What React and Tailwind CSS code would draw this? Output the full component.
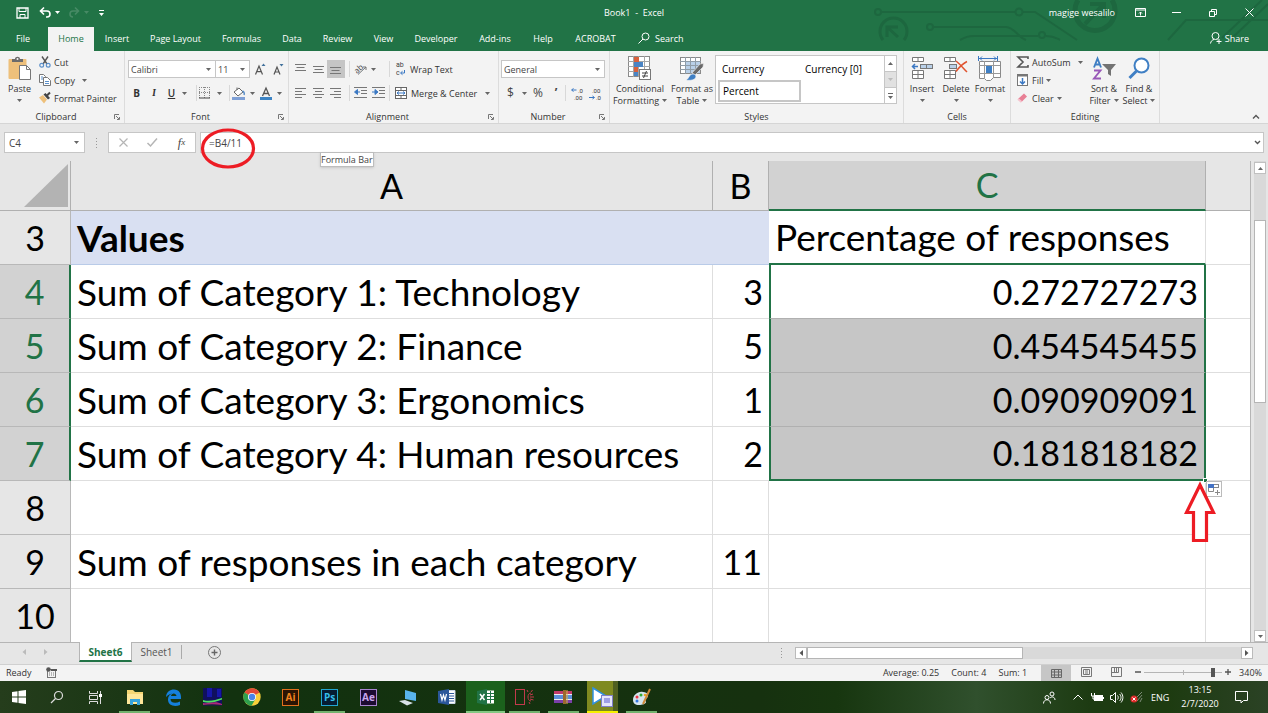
import React, { useState } from "react";

const Svg = ({ w, h, children, className = "" }) => (
  <svg width={w} height={h} viewBox={`0 0 ${w} ${h}`} fill="none" className={`shrink-0 overflow-visible ${className}`} aria-hidden="true">
    {children}
  </svg>
);

const Caret = ({ className = "", color = "#666" }) => (
  <Svg w={5} h={3} className={className}><path d="M0 0h5L2.500 3z" fill={color} /></Svg>
);

/* ---------- ribbon icons ---------- */
const PasteIcon = () => (
  <Svg w={24} h={25}>
    <rect x="0.500" y="3" width="18" height="20" rx="1" fill="#eec07b" />
    <path d="M4 6V3h3c0-3 5-3 5 0h3v3z" fill="#6b6b6b" />
    <circle cx="9.500" cy="3" r="1" fill="#f3f3f3" />
    <path d="M11.500 9.500h7l4 4v10h-11z" fill="#fff" stroke="#777" />
    <path d="M18.500 9.500v4h4" stroke="#777" />
  </Svg>
);
const CutIcon = () => (
  <Svg w={12} h={12}>
    <path d="M3 0.500l5 7.500M9 0.500L4 8" stroke="#555" strokeWidth="1.400" />
    <circle cx="2.700" cy="9.300" r="1.900" stroke="#5b8fc9" strokeWidth="1.200" />
    <circle cx="9.200" cy="9.300" r="1.900" stroke="#5b8fc9" strokeWidth="1.200" />
  </Svg>
);
const CopyIcon = () => (
  <Svg w={12} h={12}>
    <path d="M0.500 0.500h4l2 2v6h-6z" fill="#fff" stroke="#777" />
    <path d="M4.500 3.500h4l3 3v5h-7z" fill="#fff" stroke="#777" />
    <path d="M2 3h2M2 5h2M6 7.500h4M6 9.500h4" stroke="#5b8fc9" />
  </Svg>
);
const BrushIcon = () => (
  <Svg w={12} h={12}>
    <path d="M0 5.500L4 3l4 4.500-3 4z" fill="#eec07b" />
    <path d="M4.500 2.500l2-1.500 4.500 5-2 1.500z" fill="#444" />
    <path d="M8 3.500L11 0.500" stroke="#444" strokeWidth="2" />
  </Svg>
);
const Launcher = () => (
  <Svg w={6} h={6}><path d="M0.500 5V0.500H5M2 2l3 3M5.500 3v2.500H3" stroke="#777" /></Svg>
);
const GrowFont = ({ small }) => (
  <Svg w={12} h={14}>
    {small ? (
      <><path d="M1 12.500L4 5l3 7.500M2 10h4" stroke="#555" strokeWidth="1.200" /><path d="M6.500 2h4L8.500 4.500z" fill="#41719c" /></>
    ) : (
      <><path d="M0.500 12.500L4 4l3.500 8.500M1.700 9.700h4.600" stroke="#555" strokeWidth="1.200" /><path d="M6.500 4h4L8.500 1.500z" fill="#41719c" /></>
    )}
  </Svg>
);
const BorderIcon = () => (
  <Svg w={12} h={12}>
    <path d="M0.500 0v11M5.500 0v11M10.500 0v11M0 0.500h11M0 5.500h11" stroke="#888" strokeDasharray="1 1" />
    <path d="M0 11h11" stroke="#444" />
  </Svg>
);
const FillIcon = () => (
  <Svg w={14} h={13}>
    <path d="M2 5l5-4 4 4-5 4z" fill="#fff" stroke="#666" />
    <path d="M5 3V0.500" stroke="#666" />
    <path d="M10.500 4c2 1 2 3 1.500 4" stroke="#5b8fc9" strokeWidth="1.500" />
    <rect y="10" width="13" height="3" fill="#7fa0d6" />
  </Svg>
);
const FontColorIcon = () => (
  <Svg w={12} h={13}>
    <path d="M2.500 9L6 1l3.500 8M3.500 6.500h5" stroke="#555" strokeWidth="1.300" />
    <rect y="10" width="12" height="3" fill="#3b83c4" />
  </Svg>
);
const Lines = ({ d }) => <Svg w={12} h={12}><path d={d} stroke="#777" /></Svg>;
const TOP = "M0 1.500h11M1.500 4.500h8M0 7.500h11";
const MID = "M0 3.500h11M1.500 6.500h8M0 9.500h11";
const BOT = "M0 4.500h11M1.500 7.500h8M0 10.500h11";
const LEFT = "M0 1.500h11M0 4.500h7M0 7.500h11M0 10.500h7";
const CENTER = "M0 1.500h11M2 4.500h7M0 7.500h11M2 10.500h7";
const RIGHT = "M0 1.500h11M4 4.500h7M0 7.500h11M4 10.500h7";
const OrientIcon = () => (
  <Svg w={14} h={12}>
    <text x="0" y="9" fontSize="8" fill="#444" transform="rotate(-42 4 6)" fontFamily="Open Sans">ab</text>
    <path d="M4 11.500L12 4M9 4h3v3" stroke="#777" />
  </Svg>
);
const IndentIcon = ({ right }) => (
  <Svg w={14} h={12}>
    <path d="M0 0.500h13M7 3.500h6M7 6.500h6M0 10.500h13" stroke="#777" />
    {right ? <path d="M0 5h4M3 2.500L6 5 3 7.500z" stroke="#3b78c3" fill="#3b78c3" /> : <path d="M6 5H2M3.500 2.500L0.500 5l3 2.500z" stroke="#3b78c3" fill="#3b78c3" />}
  </Svg>
);
const WrapIcon = () => (
  <Svg w={11} h={14}>
    <text x="1" y="5" fontSize="7" fill="#444" fontFamily="Roboto">ab</text>
    <text x="1" y="13" fontSize="7" fill="#444" fontFamily="Roboto">c</text>
    <path d="M9.500 8v3H6M7.500 9.300L5.500 11l2 1.700" stroke="#3b78c3" />
  </Svg>
);
const MergeIcon = () => (
  <Svg w={13} h={13}>
    <rect x="0.500" y="0.500" width="11" height="11" fill="#fff" stroke="#666" />
    <path d="M0 3.500h12M0 8.500h12M6 0v3M6 9v3" stroke="#666" />
    <path d="M2 6h8M4 4.500L2 6l2 1.500M8 4.500L10 6l-2 1.500" stroke="#3b78c3" />
  </Svg>
);
const DecimalIcon = ({ dec }) => (
  <Svg w={13} h={13}>
    <text x={dec ? 3 : 7} y="6" fontSize="6" fill="#333" fontFamily="Roboto">{dec ? ".00" : ".0"}</text>
    <text x={dec ? 7 : 3} y="13" fontSize="6" fill="#333" fontFamily="Roboto">{dec ? ".0" : ".00"}</text>
    {dec ? <path d="M0 10.500h5M3.500 9l2 1.500-2 1.500" stroke="#3b78c3" /> : <path d="M5.500 3H1M2.500 1.500L0.500 3l2 1.500" stroke="#3b78c3" />}
  </Svg>
);
const ConditionalIcon = () => (
  <Svg w={24} h={25}>
    <rect x="0.500" y="0.500" width="21" height="20" fill="#fff" stroke="#8a8a8a" />
    <path d="M0 5.500h22M0 10.500h22M0 15.500h22M5.500 0v21M10.500 0v21M16.500 0v21" stroke="#a5a5a5" />
    <rect x="6" y="1" width="5" height="5" fill="#d9613c" /><rect x="6" y="6" width="9" height="5" fill="#4a84c4" />
    <rect x="6" y="11" width="4" height="5" fill="#d9613c" /><rect x="6" y="16" width="4" height="4" fill="#4a84c4" />
    <rect x="11.500" y="13.500" width="11" height="10" fill="#fff" stroke="#777" />
    <path d="M14 17h6M14 20h6M18.500 15l-3 7" stroke="#444" />
  </Svg>
);
const TableFormatIcon = () => (
  <Svg w={25} h={25}>
    <rect x="0.500" y="1.500" width="20" height="16" fill="#fff" stroke="#8a8a8a" />
    <rect x="5" y="6" width="15" height="11" fill="#b9d0e8" />
    <path d="M0 5.500h21M0 9.500h21M0 13.500h21M5.500 1v17M10.500 1v17M15.500 1v17" stroke="#909da8" />
    <path d="M23.500 7.500L20 8 12 17l3 2 8-8z" fill="#6a6a6a" stroke="#f3f3f3" strokeWidth="0.600" />
    <path d="M6 24c3-1 3-6 7-6 3 0 4 3 1.500 5-2 1.500-6 1.500-8.500 1z" fill="#3f7fc4" stroke="#f3f3f3" strokeWidth="0.600" />
  </Svg>
);
const InsertCells = () => (
  <Svg w={22} h={24}>
    <path d="M1.500 0.500h11v4h-11zM7 0.500v4M1.500 13.500h11v8h-11zM7 13.500v8M1.500 17.500h11" fill="#fff" stroke="#777" />
    <rect x="9.500" y="7.500" width="12" height="4" fill="#b9d0e8" stroke="#777" /><path d="M15.500 7v5" stroke="#777" />
    <path d="M7 9.500H2M4 7L1.500 9.500 4 12" stroke="#3b78c3" strokeWidth="1.500" />
  </Svg>
);
const DeleteCells = () => (
  <Svg w={24} h={24}>
    <path d="M0.500 0.500h11v4h-11zM6 0.500v4M0.500 13.500h11v8h-11zM6 13.500v8M0.500 17.500h11" fill="#fff" stroke="#777" />
    <rect x="5.500" y="7.500" width="7" height="4" fill="#b9d0e8" stroke="#777" />
    <path d="M12 4c4 3 7 7 11 11M23 4.500c-4 2-8 6-11 10" stroke="#e0532f" strokeWidth="1.500" />
  </Svg>
);
const FormatCells = () => (
  <Svg w={24} h={25}>
    <path d="M1 2.500h18M4 0.500l-2 2 2 2M16 0.500l2 2-2 2M0.500 0v5M19.500 0v5" stroke="#3b78c3" />
    <path d="M1.500 5.500h21v16h-7l-3 3h-4l-2-2h-5z" fill="#fff" stroke="#8a8a8a" />
    <path d="M1 9.500h21M1 17.500h21M6.500 5v17M15.500 5v17" stroke="#999" />
    <rect x="8" y="10" width="6" height="7" fill="#3f7fc4" />
  </Svg>
);
const SortIcon = () => (
  <Svg w={24} h={24}>
    <path d="M2 10.500L5.500 1.500 9 10.500M3 7.500h5" stroke="#3f7fc4" strokeWidth="1.900" />
    <path d="M2 13.500h6.500L2 21.500h7" stroke="#9858b8" strokeWidth="1.900" />
    <path d="M10 7h14l-5 6v6l-3-2v-4z" fill="#737373" />
  </Svg>
);
const FindIcon = () => (
  <Svg w={22} h={24}>
    <circle cx="13.500" cy="8.500" r="7" stroke="#3f7fc4" strokeWidth="2" fill="#fff" />
    <path d="M8.500 14L1.500 21" stroke="#3f7fc4" strokeWidth="3" />
  </Svg>
);
const SumIcon = () => <Svg w={12} h={12}><path d="M11 3V1H1l5 5-5 5h10V9" stroke="#555" strokeWidth="1.600" /></Svg>;
const FillDown = () => (
  <Svg w={12} h={12}><rect x="0.500" y="0.500" width="10" height="11" fill="#fff" stroke="#777" /><path d="M0 1.500h11" stroke="#777" strokeWidth="2" /><path d="M5.500 4v6M3 7.500l2.500 2.500L8 7.500" stroke="#3b78c3" strokeWidth="1.500" /></Svg>
);
const Eraser = () => (
  <Svg w={12} h={12}><path d="M1 7l6-5.500 3 3L4.500 10z" fill="#e87f95" /><path d="M1 7l3.500 3" stroke="#f6c4ce" strokeWidth="2" /></Svg>
);

/* ---------- ribbon parts ---------- */
const IconBtn = ({ label, className = "", children }) => (
  <button type="button" aria-label={label} className={`flex shrink-0 items-center justify-center ${className}`}>{children}</button>
);
const Group = ({ title, launcher, className = "", children }) => (
  <section aria-label={title} className={`relative flex shrink-0 flex-col border-r border-[#dcdcdc] ${className}`}>
    <div className="flex h-[58px] pt-[2px]">{children}</div>
    <div className={`flex h-[14px] items-center justify-center text-[#333] ${launcher ? "pr-3" : ""}`}>{title}</div>
    {launcher && (
      <button type="button" aria-label={`${title} settings`} className="absolute right-1 bottom-[3px]"><Launcher /></button>
    )}
  </section>
);
const BigBtn = ({ icon, lines, className = "" }) => (
  <button type="button" className={`flex shrink-0 flex-col items-center pt-[2px] ${className}`}>
    <span className="flex h-[27px] items-center">{icon}</span>
    <span className="flex h-3 items-center whitespace-nowrap">{lines[0]}</span>
    <span className="flex h-3 items-center gap-[3px] whitespace-nowrap">{lines[1]}<Caret /></span>
  </button>
);
const RowBtn = ({ icon, label, caret, gap = "gap-1" }) => (
  <button type="button" className="flex h-[18px] items-center gap-[3px] whitespace-nowrap">
    {icon}<span>{label}</span>{caret && <Caret className={gap} />}
  </button>
);
const Sep = () => <span className="h-4 w-px shrink-0 bg-[#d8d8d8]" />;
const Combo = ({ label, value, className }) => (
  <span className={`relative flex h-[18px] shrink-0 items-center border border-[#c6c6c6] bg-white ${className}`}>
    <select aria-label={label} defaultValue={value} className="h-full w-full appearance-none bg-transparent pl-[2px] text-[#444] outline-none">
      <option>{value}</option>
    </select>
    <Caret className="pointer-events-none absolute right-1" />
  </span>
);

const Ribbon = () => (
  <div className="flex h-[73px] shrink-0 overflow-hidden border-b border-[#d5d5d5] bg-[#f3f3f3] text-[9px] text-[#333]">
    <Group title="Clipboard" launcher className="w-[125px]">
      <BigBtn icon={<PasteIcon />} lines={["Paste", ""]} className="w-[39px]" />
      <div className="flex flex-col">
        <RowBtn icon={<CutIcon />} label="Cut" />
        <RowBtn icon={<CopyIcon />} label="Copy" caret gap="ml-1" />
        <RowBtn icon={<BrushIcon />} label="Format Painter" />
      </div>
    </Group>
    <Group title="Font" launcher className="w-[164px]">
      <div className="flex flex-col pt-1 pl-[3px]">
        <div className="flex h-6 items-center">
          <Combo label="Font" value="Calibri" className="w-[88px]" />
          <Combo label="Font size" value="11" className="-ml-px w-[35px]" />
          <IconBtn label="Increase font size" className="ml-[2px] w-[18px]"><GrowFont /></IconBtn>
          <IconBtn label="Decrease font size" className="w-[18px]"><GrowFont small /></IconBtn>
        </div>
        <div className="flex h-6 items-center text-[10px]">
          <IconBtn label="Bold" className="w-[17px] font-bold">B</IconBtn>
          <IconBtn label="Italic" className="w-[18px] font-serif font-bold italic">I</IconBtn>
          <IconBtn label="Underline" className="w-[17px] font-semibold underline">U</IconBtn>
          <IconBtn label="Underline style" className="w-2"><Caret /></IconBtn>
          <span className="w-2" /><Sep />
          <IconBtn label="Borders" className="w-4"><BorderIcon /></IconBtn>
          <IconBtn label="Border style" className="w-3"><Caret /></IconBtn>
          <span className="w-1" /><Sep />
          <IconBtn label="Fill color" className="w-[18px]"><FillIcon /></IconBtn>
          <IconBtn label="Fill palette" className="w-2"><Caret /></IconBtn>
          <IconBtn label="Font color" className="w-[19px]"><FontColorIcon /></IconBtn>
          <IconBtn label="Font palette" className="w-2"><Caret /></IconBtn>
        </div>
      </div>
    </Group>
    <Group title="Alignment" launcher className="w-[210px]">
      <div className="flex flex-col pt-1 pl-[3px]">
        <div className="flex h-6 items-center">
          <IconBtn label="Top align" className="h-[18px] w-[18px]"><Lines d={TOP} /></IconBtn>
          <IconBtn label="Middle align" className="h-[18px] w-[17px]"><Lines d={MID} /></IconBtn>
          <IconBtn label="Bottom align" className="h-[18px] w-[18px] bg-[#c5c5c5]"><Lines d={BOT} /></IconBtn>
          <span className="w-1" /><Sep />
          <IconBtn label="Orientation" className="ml-[3px] w-4"><OrientIcon /></IconBtn>
          <IconBtn label="Orientation options" className="w-2"><Caret /></IconBtn>
          <span className="w-3" /><Sep />
          <button type="button" className="ml-[5px] flex items-center gap-1 whitespace-nowrap"><WrapIcon />Wrap Text</button>
        </div>
        <div className="flex h-6 items-center">
          <IconBtn label="Align left" className="w-[18px]"><Lines d={LEFT} /></IconBtn>
          <IconBtn label="Center" className="w-[17px]"><Lines d={CENTER} /></IconBtn>
          <IconBtn label="Align right" className="w-[18px]"><Lines d={RIGHT} /></IconBtn>
          <span className="w-1" /><Sep />
          <IconBtn label="Decrease indent" className="ml-[2px] w-[18px]"><IndentIcon /></IconBtn>
          <IconBtn label="Increase indent" className="w-[18px]"><IndentIcon right /></IconBtn>
          <span className="w-px" /><Sep />
          <button type="button" className="ml-[5px] flex items-center gap-[3px] whitespace-nowrap"><MergeIcon />Merge &amp; Center</button>
          <IconBtn label="Merge options" className="ml-1 w-3"><Caret /></IconBtn>
        </div>
      </div>
    </Group>
    <Group title="Number" launcher className="w-[111px]">
      <div className="flex flex-col pt-1 pl-[2px]">
        <div className="flex h-6 items-center"><Combo label="Number format" value="General" className="w-[104px]" /></div>
        <div className="flex h-6 items-center text-[12px] text-[#444]">
          <IconBtn label="Accounting format" className="w-[19px]">$</IconBtn>
          <IconBtn label="Currency options" className="w-2"><Caret /></IconBtn>
          <IconBtn label="Percent style" className="w-5">%</IconBtn>
          <IconBtn label="Comma style" className="w-4 font-bold">’</IconBtn>
          <span className="w-px" /><Sep />
          <IconBtn label="Increase decimal" className="ml-[2px] w-[18px]"><DecimalIcon /></IconBtn>
          <IconBtn label="Decrease decimal" className="w-[18px]"><DecimalIcon dec /></IconBtn>
        </div>
      </div>
    </Group>
    <Group title="Styles" className="w-[294px]">
      <BigBtn icon={<ConditionalIcon />} lines={["Conditional", "Formatting"]} className="w-[60px]" />
      <BigBtn icon={<TableFormatIcon />} lines={["Format as", "Table"]} className="w-[44px]" />
      <div className="mt-[2px] ml-px flex h-[49px] flex-1 border border-[#c6c6c6] bg-white text-[10px] text-black">
        <div className="grid flex-1 grid-cols-2 content-start pt-[2px] pl-[2px]">
          <button type="button" className="h-[22px] pl-1 text-left">Currency</button>
          <button type="button" className="h-[22px] pl-1 text-left">Currency [0]</button>
          <button type="button" className="h-[22px] border-2 border-[#c6c6c6] pl-[3px] text-left">Percent</button>
        </div>
        <div className="flex w-3 flex-col border-l border-[#c6c6c6]">
          <IconBtn label="Previous styles" className="flex-1"><Caret className="rotate-180" /></IconBtn>
          <IconBtn label="Next styles" className="flex-1 border-y border-[#c6c6c6] bg-[#e1e1e1]"><Caret color="#bbb" /></IconBtn>
          <IconBtn label="More styles" className="flex-1"><Svg w={5} h={6}><path d="M0 0h5v1H0zM0 3h5L2.500 6z" fill="#666" /></Svg></IconBtn>
        </div>
      </div>
      <span className="w-[6px]" />
    </Group>
    <Group title="Cells" className="w-[107px]">
      <span className="w-px" />
      <BigBtn icon={<InsertCells />} lines={["Insert", ""]} className="w-[34px]" />
      <BigBtn icon={<DeleteCells />} lines={["Delete", ""]} className="w-[34px]" />
      <BigBtn icon={<FormatCells />} lines={["Format", ""]} className="w-[34px]" />
    </Group>
    <Group title="Editing" className="w-[149px]">
      <div className="flex w-[75px] flex-col pl-[6px]">
        <RowBtn icon={<SumIcon />} label="AutoSum" caret gap="ml-1" />
        <RowBtn icon={<FillDown />} label="Fill" caret gap="" />
        <RowBtn icon={<Eraser />} label="Clear" caret gap="" />
      </div>
      <BigBtn icon={<SortIcon />} lines={["Sort &", "Filter"]} className="w-[36px]" />
      <BigBtn icon={<FindIcon />} lines={["Find &", "Select"]} className="w-[34px]" />
    </Group>
    <div className="flex flex-1 items-end justify-end pr-2 pb-1">
      <IconBtn label="Collapse ribbon"><Svg w={8} h={5}><path d="M1 4.500L4 1.500l3 3" stroke="#555" strokeWidth="1.400" /></Svg></IconBtn>
    </div>
  </div>
);

/* ---------- header ---------- */
const Circuit = () => (
  <svg className="pointer-events-none absolute top-0 right-0" width="395" height="42" viewBox="873 0 395 42" fill="none" stroke="#1d673f" strokeWidth="2" aria-hidden="true">
    <circle cx="878" cy="12" r="3" /><path d="M881 12h134M1023 12h12l42 28" /><circle cx="1019" cy="12" r="3.500" />
    <path d="M883 40a13.500 13.500 0 1 1 21 0" strokeWidth="3" /><path d="M898 37l-11-10M887 37V27h11" strokeWidth="3" />
    <circle cx="930" cy="27" r="3" /><path d="M933 27h73c8 0 12 10 20 13" /><path d="M960 40c6-3 8-4 14-4h64M1046 36c8 0 10 2 14 4" /><circle cx="1042" cy="35" r="3" />
    <path d="M1078 0a20 20 0 1 0 34 0" strokeWidth="5" /><path d="M1085 24l18-19M1090 4h14v14" strokeWidth="4" />
    <path d="M1168 40l18-20h82M1222 38l40-38M1232 38l36-34" />
  </svg>
);
const TABS = [
  ["File", "w-[46px]"], ["Home", "w-[46px]"], ["Insert", "w-[46px]"], ["Page Layout", "w-[71px]"], ["Formulas", "w-[61px]"], ["Data", "w-[40px]"],
  ["Review", "w-[51px]"], ["View", "w-[41px]"], ["Developer", "w-[64px]"], ["Add-ins", "w-[54px]"], ["Help", "w-[42px]"], ["ACROBAT", "w-[63px]"],
];
const Header = () => (
  <header className="relative flex h-[51px] shrink-0 flex-col bg-[#217346] text-[9px] text-white">
    <Circuit />
    <div className="relative flex h-[27px] items-center pb-[2px]">
      <div className="flex flex-1 items-center">
        <IconBtn label="Save" className="ml-4"><Svg w={13} h={12}><path d="M1 1h11v10H1z" stroke="#fff" strokeWidth="1.300" /><path d="M3 1v3.500h7V1M4 11V7.500h5V11" stroke="#fff" /></Svg></IconBtn>
        <IconBtn label="Undo" className="ml-[10px]"><Svg w={13} h={11}><path d="M5 0.500L1.500 4 5 7.500M2 4h6c4 0 4 6 0 6H7" stroke="#fff" strokeWidth="1.600" /></Svg></IconBtn>
        <IconBtn label="Undo history" className="ml-[3px]"><Caret color="#fff" /></IconBtn>
        <IconBtn label="Redo" className="ml-2"><Svg w={12} h={11}><path d="M7 0.500L10.500 4 7 7.500M10 4H5C1 4 1 10 5 10" stroke="#478a65" strokeWidth="1.600" /></Svg></IconBtn>
        <IconBtn label="Redo history" className="ml-1"><Caret color="#478a65" /></IconBtn>
        <IconBtn label="Customize toolbar" className="ml-[10px]"><Svg w={5} h={6}><path d="M0 0h5v1H0zM0 3h5L2.500 6z" fill="#fff" /></Svg></IconBtn>
      </div>
      <h1 className="whitespace-pre">Book1  -  Excel</h1>
      <div className="flex flex-1 items-center justify-end">
        <span className="mr-5">magige wesalilo</span>
        <IconBtn label="Ribbon display options" className="mr-[26px]"><Svg w={11} h={9}><path d="M0.500 0.500h10v8h-10zM0 2h11M5.500 7.500V4M4 5.500L5.500 4 7 5.500" stroke="#fff" /></Svg></IconBtn>
        <IconBtn label="Minimize" className="mr-[28px]"><Svg w={9} h={2}><path d="M0 0.500h9" stroke="#fff" /></Svg></IconBtn>
        <IconBtn label="Restore" className="mr-7"><Svg w={8} h={8}><path d="M0.500 2.500h5v5h-5zM2.500 2.500v-2h5v5h-2" stroke="#fff" /></Svg></IconBtn>
        <IconBtn label="Close" className="mr-[14px]"><Svg w={9} h={9}><path d="M0.500 0.500l8 8M8.500 0.500l-8 8" stroke="#fff" /></Svg></IconBtn>
      </div>
    </div>
    <nav className="relative flex h-6 items-stretch">
      {TABS.map(([t, w]) => (
        <button key={t} type="button" className={`${w} shrink-0 pb-[2px] whitespace-nowrap ${t === "Home" ? "bg-[#f3f3f3] text-[#217346]" : ""} ${t === "File" ? "mr-[2px]" : ""}`}>{t}</button>
      ))}
      <button type="button" className="ml-[11px] flex items-center gap-[5px] pb-[2px]">
        <Svg w={12} h={12}><circle cx="7.500" cy="4.500" r="3.500" stroke="#fff" /><path d="M5 7l-4.500 4.500" stroke="#fff" /></Svg>Search
      </button>
      <button type="button" className="mr-[19px] ml-auto flex items-center gap-[3px] pb-[2px]">
        <Svg w={12} h={12}><circle cx="5.500" cy="4" r="3.500" stroke="#fff" /><path d="M0.500 11.500C1 9 2 8 4 7.500M7 7.500l1 1M9 7v5M6.500 9.500h5" stroke="#fff" /></Svg>Share
      </button>
    </nav>
  </header>
);

/* ---------- formula bar ---------- */
const FormulaBar = () => (
  <div className="relative z-10 flex h-[37px] shrink-0 items-start gap-[10px] bg-[#e6e6e6] pt-2 pr-1 pl-1 text-[9px] text-[#444]">
    <div className="relative flex h-[21px] w-[81px] shrink-0 items-center border border-[#c6c6c6] bg-white">
      <input aria-label="Name box" defaultValue="C4" className="h-full w-full bg-transparent pl-1 text-[10px] outline-none" />
      <Caret className="absolute right-[5px]" />
    </div>
    <Svg w={3} h={21}><path d="M1.500 6v11" stroke="#999" strokeDasharray="1 2" /></Svg>
    <div className="flex h-[21px] w-[88px] shrink-0 items-center justify-around border border-[#c6c6c6] bg-white">
      <IconBtn label="Cancel"><Svg w={9} h={9}><path d="M0.500 0.500l8 8M8.500 0.500l-8 8" stroke="#b5b5b5" strokeWidth="1.200" /></Svg></IconBtn>
      <IconBtn label="Enter"><Svg w={11} h={9}><path d="M0.500 5l3 3L10 0.500" stroke="#b5b5b5" strokeWidth="1.500" /></Svg></IconBtn>
      <IconBtn label="Insert function" className="font-['Liberation_Serif',serif] text-[12px] italic">f<span className="text-[9px]">x</span></IconBtn>
    </div>
    <div className="-ml-[6px] flex h-[21px] flex-1 items-center border border-[#c6c6c6] bg-white">
      <input aria-label="Formula" defaultValue="=B4/11" className="h-full min-w-0 flex-1 bg-transparent pl-2 text-[10px] outline-none" />
      <IconBtn label="Expand formula bar" className="mr-[2px]"><Svg w={7} h={5}><path d="M1 1l2.500 2.500L6 1" stroke="#555" strokeWidth="1.400" /></Svg></IconBtn>
    </div>
    <svg className="pointer-events-none absolute top-1 left-[200px]" width="56" height="42" viewBox="0 0 56 42" fill="none" aria-hidden="true">
      <ellipse cx="28" cy="20.500" rx="25.500" ry="18.500" stroke="#ed1c24" strokeWidth="3.200" />
    </svg>
    <div role="tooltip" className="absolute top-7 left-[320px] flex h-[15px] items-center border border-[#bdbdbd] bg-white whitespace-nowrap shadow-sm">Formula Bar</div>
  </div>
);

/* ---------- sheet ---------- */
const ROWS = [
  [3, "Values", "", "Percentage of responses"],
  [4, "Sum of Category 1: Technology", "3", "0.272727273"],
  [5, "Sum of Category 2: Finance", "5", "0.454545455"],
  [6, "Sum of Category 3: Ergonomics", "1", "0.090909091"],
  [7, "Sum of Category 4: Human resources", "2", "0.181818182"],
  [8, "", "", ""],
  [9, "Sum of responses in each category", "11", ""],
  [10, "", "", ""],
];
const Sheet = () => (
  <div className="flex min-h-0 flex-1 overflow-hidden bg-[#e6e6e6]">
    <div className="min-w-0 flex-1 overflow-hidden border-r border-[#b5b5b5] bg-white">
      <table className="w-full table-fixed border-separate border-spacing-0 font-['Lato',sans-serif] text-[34px] leading-[48px] text-black">
        <colgroup><col className="w-[71px]" /><col /><col className="w-[56px]" /><col className="w-[437px]" /><col className="w-[44px]" /></colgroup>
        <thead>
          <tr className="h-[50px] bg-[#e6e6e6]">
            <th className="border-r border-b border-[#b0b0b0] p-0" aria-label="Select all">
              <Svg w={46} h={46} className="ml-auto"><path d="M44 1v43H0z" fill="#b3b3b3" /></Svg>
            </th>
            <th className="border-r border-b border-[#b0b0b0] p-0 font-normal">A</th>
            <th className="border-r border-b border-[#b0b0b0] p-0 font-normal">B</th>
            <th className="border-r border-b-2 border-r-[#b0b0b0] border-b-[#217346] bg-[#d2d2d2] p-0 font-normal text-[#217346]">C</th>
            <th className="border-b border-[#b0b0b0] p-0" />
          </tr>
        </thead>
        <tbody>
          {ROWS.map(([n, a, b, c]) => {
            const sel = n >= 4 && n <= 7;
            const head = n === 3;
            return (
              <tr key={n} className="h-[54px]">
                <th scope="row" className={`border-b p-0 font-normal ${sel ? "border-r-2 border-r-[#217346] border-b-[#b8b8b8] bg-[#d2d2d2] text-[#217346]" : "border-r border-[#b8b8b8] bg-[#e6e6e6]"}`}>{n}</th>
                <td className={`border-b py-0 pr-0 pl-[6px] text-[37px] whitespace-nowrap ${head ? "border-[#b9cbe8] bg-[#d9e0f2] font-bold" : "border-r border-[#dedede]"}`}>{a}</td>
                <td className={`border-b p-0 pr-[6px] text-right ${head ? "border-[#b9cbe8] bg-[#d9e0f2]" : sel ? "border-[#dedede]" : "border-r border-[#dedede]"}`}>{b}</td>
                <td className={`relative p-0 px-[6px] whitespace-nowrap ${head ? "border-r border-b-2 border-r-[#dedede] border-b-[#217346] text-[37px]" : sel ? "border-x-2 border-x-[#217346] text-right" : "border-r border-b border-[#dedede]"} ${sel && n > 4 ? "bg-[#c6c6c6]" : ""} ${n === 7 ? "z-10 border-b-2 border-b-[#217346]" : sel ? "border-b border-b-[#b0b0b0]" : ""}`}>
                  {c}
                  {n === 7 && (
                    <>
                      <span className="absolute -right-1 -bottom-1 h-[5px] w-[5px] border border-white bg-[#217346]" />
                      <button type="button" aria-label="Auto fill options" className="absolute -right-[18px] -bottom-[18px] flex h-4 w-4 items-center justify-center border border-[#bbb] bg-white">
                        <Svg w={12} h={12}><rect x="0.500" y="1.500" width="10" height="3" stroke="#888" /><rect x="0" y="1" width="6" height="4" fill="#4472c4" /><path d="M0.500 5v3.500h5V5M7 9.500h5M9.500 7v5" stroke="#888" /></Svg>
                      </button>
                      <svg className="pointer-events-none absolute -right-[12px] -bottom-[64px]" width="32" height="62" viewBox="0 0 32 62" fill="none" aria-hidden="true">
                        <path d="M16 4L2.500 31.500H9.500V59.500H22.500V31.500H29.500z" fill="#fff" stroke="#ed1c24" strokeWidth="3.200" />
                      </svg>
                    </>
                  )}
                </td>
                <td className="border-b border-[#dedede] p-0" />
              </tr>
            );
          })}
        </tbody>
      </table>
    </div>
    <div className="mr-[2px] ml-[3px] flex w-3 shrink-0 flex-col bg-[#d9d9d9]">
      <IconBtn label="Scroll up" className="mt-px h-3 border border-[#c0c0c0] bg-white"><Caret className="rotate-180" /></IconBtn>
      <div className="mt-[46px] h-[183px] border border-[#b5b5b5] bg-white" />
      <IconBtn label="Scroll down" className="mt-auto h-3 border border-[#c0c0c0] bg-white"><Caret /></IconBtn>
    </div>
  </div>
);

const SideCaret = ({ left, color = "#555" }) => (
  <Svg w={4} h={6}><path d={left ? "M4 0v6L0.500 3z" : "M0 0v6l3.500-3z"} fill={color} /></Svg>
);
const SheetTabs = () => (
  <div className="flex h-[22px] shrink-0 items-start border-t border-[#b5b5b5] bg-[#e6e6e6] text-[9px] text-[#555]">
    <div className="flex h-[18px] w-[79px] shrink-0 items-center gap-[18px] pl-[22px]">
      <IconBtn label="Previous sheet"><SideCaret left color="#bbb" /></IconBtn>
      <IconBtn label="Next sheet"><SideCaret color="#bbb" /></IconBtn>
    </div>
    <button type="button" className="-mt-px h-5 w-[53px] shrink-0 border-x border-b-2 border-x-[#b5b5b5] border-b-[#217346] bg-white pt-px text-[10px] font-bold text-[#217346]">Sheet6</button>
    <button type="button" className="h-[18px] w-[49px] shrink-0 text-[10px]">Sheet1</button>
    <span className="mt-[2px] h-[14px] w-px bg-[#aaa]" />
    <IconBtn label="New sheet" className="ml-[26px] h-[18px]"><Svg w={13} h={13}><circle cx="6.500" cy="6.500" r="6" stroke="#777" /><path d="M3.500 6.500h6M6.500 3.500v6" stroke="#666" strokeWidth="1.400" /></Svg></IconBtn>
    <div className="mt-1 mr-[15px] ml-auto flex h-3 w-[473px] items-stretch">
      <Svg w={3} h={12}><path d="M1.500 1v10" stroke="#999" strokeDasharray="1 2" /></Svg>
      <div className="ml-3 flex flex-1 bg-[#d9d9d9]">
        <IconBtn label="Scroll left" className="w-3 border border-[#bbb] bg-white"><SideCaret left /></IconBtn>
        <div className="w-[216px] border border-[#b5b5b5] bg-white" />
        <IconBtn label="Scroll right" className="ml-auto w-3 border border-[#bbb] bg-white"><SideCaret /></IconBtn>
      </div>
    </div>
  </div>
);
const StatusBar = () => {
  const [zoom, setZoom] = useState(340);
  return (
    <div className="flex h-[17px] shrink-0 items-center border-t border-[#d0d0d0] bg-[#f3f3f3] pb-[2px] text-[9px] text-[#333]">
      <span className="ml-[6px]">Ready</span>
      <IconBtn label="Record macro" className="ml-[14px]"><Svg w={11} h={11}><rect x="1.500" y="2.500" width="8" height="8" stroke="#777" /><path d="M5 2h6v2H5z" fill="#555" /><path d="M3 6h6M3 8h6" stroke="#777" strokeDasharray="1 1" /><circle cx="2.500" cy="2.500" r="2.300" fill="#555" /></Svg></IconBtn>
      <div className="ml-auto flex gap-3 pr-[14px] whitespace-nowrap"><span>Average: 0.25</span><span>Count: 4</span><span>Sum: 1</span></div>
      <IconBtn label="Normal view" className="-mb-[2px] h-4 w-[30px] bg-[#c6c6c6]"><Svg w={11} h={9}><path d="M0.500 0.500h10v8h-10zM0 3h11M0 6h11M3.500 0v9M7.500 0v9" stroke="#666" /></Svg></IconBtn>
      <IconBtn label="Page layout view" className="w-[31px]"><Svg w={11} h={10}><path d="M0.500 0.500h10v9h-10zM2.500 2.500h6v5h-6zM4 4h3M4 6h3" stroke="#777" /></Svg></IconBtn>
      <IconBtn label="Page break view" className="w-[29px]"><Svg w={11} h={10}><path d="M0.500 0.500h10v9h-10zM3.500 0v5.500M0 5.500h7.500V0M5.500 0v5" stroke="#777" /></Svg></IconBtn>
      <IconBtn label="Zoom out" className="ml-[3px] w-2"><Svg w={6} h={2}><path d="M0 1h6" stroke="#555" strokeWidth="1.500" /></Svg></IconBtn>
      <input type="range" aria-label="Zoom" min="10" max="375" value={zoom} onChange={(e) => setZoom(Number(e.target.value))}
        className="mx-[2px] h-3 w-[78px] appearance-none bg-[linear-gradient(#b5b5b5,#b5b5b5),linear-gradient(#b5b5b5,#b5b5b5)] bg-[length:100%_1px,1px_5px] bg-center bg-no-repeat [&::-webkit-slider-thumb]:h-[9px] [&::-webkit-slider-thumb]:w-1 [&::-webkit-slider-thumb]:appearance-none [&::-webkit-slider-thumb]:bg-[#555]" />
      <IconBtn label="Zoom in" className="w-2"><Svg w={6} h={6}><path d="M0 3h6M3 0v6" stroke="#555" strokeWidth="1.300" /></Svg></IconBtn>
      <span className="mr-[6px] ml-[7px]">{zoom}%</span>
    </div>
  );
};

/* ---------- taskbar ---------- */
const Adobe = ({ color, bg, children }) => (
  <span className={`flex h-[17px] w-[17px] items-center justify-center border text-[10px] leading-none font-bold ${color} ${bg}`}>{children}</span>
);
const APPS = [
  ["Start", <Svg w={14} h={14}><path d="M0 2l5.500-.8v5.300H0zM6.500 1L14 0v6.500H6.500zM0 7.500h5.500v5.300L0 12zM6.500 7.500H14V14l-7.500-1z" fill="#fff" /></Svg>],
  ["Search", <Svg w={14} h={14}><circle cx="8.500" cy="5.500" r="4" stroke="#ddd" strokeWidth="1.200" /><path d="M5.500 8.500L1 13" stroke="#ddd" strokeWidth="1.200" /></Svg>],
  ["Task view", <Svg w={14} h={13}><path d="M0.500 0v2.500h8V0M0.500 13v-2.500h8V13M0.500 4.500h8v4h-8zM11.500 0v13" stroke="#ddd" /><rect x="10" y="3" width="3" height="3" fill="#fff" /></Svg>],
  ["File Explorer", <Svg w={18} h={15}><path d="M1 0h6l2 2h8v12H1z" fill="#f5d675" /><path d="M1 4h16v10H1z" fill="#ffe69a" /><path d="M4 15V9h10v6h-3v-3H7v3z" fill="#37a3dd" /></Svg>, "on"],
  ["Edge", <Svg w={17} h={17}><path d="M1 8C1.500 2.500 5 0.500 9 0.500c5 0 7.500 4 7 9.500H5.500c0 4 5 5 9.500 2.500V16c-5 2-12 1-12-5.500 0-3 1.500-5 4-6C5 5 2.500 6 1 8zM6 7h5.500C11 3.500 6.500 3.500 6 7z" fill="#1580dc" /></Svg>],
  ["Media", <Svg w={19} h={18}><path d="M0 0h19v18H0z" fill="#10105e" /><path d="M4 0h5v9H4zM14 1h4v8h-4z" fill="#1616a8" /><path d="M0 12c7 2 12 0 19-2v1.500c-7 3-12 4-19 2.500z" fill="#4ede62" /><path d="M0 15c7 1 12-3 19 1v2H0z" fill="#ac2878" /><path d="M0 17c6-1 12-1 19 0v1H0z" fill="#16213a" /></Svg>],
  ["Chrome", <Svg w={18} h={18}><circle cx="9" cy="9" r="8.700" fill="#f9cf3a" /><path d="M9 9L1.500 4.600a8.700 8.700 0 0 1 15 0z" fill="#e24a39" /><path d="M9 9L1.500 4.600A8.700 8.700 0 0 0 8.500 17.700L12.500 11z" fill="#2fa04e" /><circle cx="9" cy="9" r="4" fill="#fff" /><circle cx="9" cy="9" r="3.200" fill="#4a85ea" /></Svg>],
  ["Illustrator", <Adobe color="border-[#e2701c] text-[#f0841f]" bg="bg-[#2b1404]">Ai</Adobe>],
  ["Photoshop", <Adobe color="border-[#22a5d0] text-[#35bdea]" bg="bg-[#061c33]">Ps</Adobe>, "on"],
  ["After Effects", <Adobe color="border-[#a884cf] text-[#c8a6ea]" bg="bg-[#1c0b31]">Ae</Adobe>],
  ["Remote", <Svg w={18} h={17}><path d="M6 1l11 3v8L6 10z" fill="#58b4ec" /><path d="M0 12l6-1 8 3-6 2.500z" fill="#d9e2e8" /></Svg>],
  ["Word", <Svg w={18} h={16}><path d="M10 1.500h7v13h-7z" fill="#fff" stroke="#ccd6e8" /><path d="M11 4.500h5M11 7h5M11 9.500h5M11 12h5" stroke="#2b579a" /><path d="M0 2l11-2v16L0 14z" fill="#2b579a" /><path d="M2.500 5l1.500 6L5.500 6 7 11l1.500-6" stroke="#fff" strokeWidth="1.200" /></Svg>],
  ["Excel", <Svg w={18} h={16}><path d="M10 1.500h7v13h-7z" fill="#fff" /><path d="M10 4.500h7M10 7.500h7M10 10.500h7M13.500 2v12" stroke="#217346" /><path d="M0 2l10-2v16L0 14z" fill="#217346" /><path d="M3 5l4.500 6M7.500 5L3 11" stroke="#fff" strokeWidth="1.500" /></Svg>, "excel"],
  ["Phone link", <Svg w={19} h={17}><rect x="0.500" y="0.500" width="9" height="15" stroke="#c23a4c" /><path d="M16 4c-4 0-4 8 0 8M13 3l-1-2M16 3l1.500-2M15 6l3-1M15 8h4M15 10l3.500 1M14 13l1 2" stroke="#c23a4c" /></Svg>, "on"],
  ["WinRAR", <Svg w={19} h={14}><rect y="1" width="18" height="3" fill="#c23b6b" /><rect y="5" width="18" height="4" fill="#5d8fda" /><rect y="10" width="18" height="3" fill="#7a3fa8" /><path d="M0 4.500h18M0 9.500h18" stroke="#eee" /><rect x="9" width="3" height="14" fill="#9c6a2c" /><path d="M13 0v14" stroke="#d6b63a" /></Svg>, "on"],
  ["Recorder", <Svg w={21} h={20}><path d="M1 1l13 8L1 17z" fill="#fff" stroke="#2f90de" strokeWidth="1.500" /><rect x="9.500" y="8.500" width="11" height="11" fill="#e6e6fa" stroke="#7f7fc8" /><path d="M13 11v5M15 11v5M17 11v5" stroke="#5a5ad0" /></Svg>, "yellow"],
  ["Paint", <Svg w={19} h={18}><path d="M1 12c0-5 5-9 10-8 5 0 6 4 4 6-2 1-2 2-1 4 0 2-4 3-7 3-4 0-6-2-6-5z" fill="#d5e4ee" /><circle cx="5" cy="9" r="1.500" fill="#e34" /><circle cx="9" cy="7" r="1.500" fill="#3a3" /><circle cx="5" cy="13" r="1.500" fill="#37d" /><circle cx="13" cy="7" r="1.300" fill="#e9a321" /><path d="M18 1l-7 15" stroke="#d18a3a" strokeWidth="2" /></Svg>, "on"],
];
const Taskbar = () => (
  <footer className="flex h-8 shrink-0 items-stretch bg-[linear-gradient(90deg,#253d1c_0%,#12320f_18%,#16310f_60%,#17360f_66%,#30502d_77%,#1d3b12_86%,#1d3b10_92%,#2b4225_100%)] text-[9px] text-white">
    {APPS.map(([name, icon, state]) => (
      <button key={name} type="button" aria-label={name} className={`relative flex shrink-0 items-center justify-center ${name === "Start" ? "w-[37px]" : "w-[39px]"} ${state === "excel" ? "bg-[#1b611c]" : state === "yellow" ? "bg-[linear-gradient(90deg,transparent_10%,#7f8a20_10%,#7f8a20_77%,#4f6020_77%,#4f6020_90%,transparent_90%)]" : ""}`}>
        {icon}
        {state && <span className={`absolute bottom-0 h-[2px] ${state === "excel" ? "inset-x-0 bg-[#83c883]" : state === "yellow" ? "inset-x-1 bg-[#f5f000]" : "inset-x-1 bg-[#72b26e]"}`} />}
      </button>
    ))}
    <div className="ml-auto flex items-center">
      <IconBtn label="People" className="mr-[17px]"><Svg w={13} h={13}><circle cx="9" cy="3" r="2" stroke="#fff" /><circle cx="4" cy="6.500" r="2" stroke="#fff" /><path d="M0.500 12.500c0-5 7-5 7 0M7 7c2-2 5-1 5 2" stroke="#fff" /></Svg></IconBtn>
      <IconBtn label="Hidden icons" className="mr-2"><Svg w={10} h={6}><path d="M0.500 5.500L5 1l4.500 4.500" stroke="#fff" /></Svg></IconBtn>
      <IconBtn label="Battery" className="mr-[6px]"><Svg w={13} h={9}><rect x="3.500" y="2.500" width="8" height="5" fill="#fff" stroke="#fff" /><path d="M12.500 4v2M0.500 0v3h3V0M2 3v3h2" stroke="#fff" /></Svg></IconBtn>
      <IconBtn label="Volume" className="mr-[7px]"><Svg w={13} h={11}><path d="M0.500 3.500h2l3-3v10l-3-3h-2zM7.500 3.500c1 1 1 3 0 4M9.500 2c2 2 2 5 0 7M11 0.500c2.500 3 2.500 7 0 10" stroke="#fff" /></Svg></IconBtn>
      <IconBtn label="Network" className="mr-2"><Svg w={13} h={12}><path d="M12 1L4 9M12 4L7 10M12 7l-2 4" stroke="#7d8c78" /><circle cx="4" cy="8" r="3.500" fill="#e02b2b" /><path d="M2.500 6.500l3 3M5.500 6.500l-3 3" stroke="#fff" /></Svg></IconBtn>
      <span className="w-[22px]">ENG</span>
      <div className="ml-1 w-[46px] text-center leading-[14px]"><div>13:15</div><div>2/7/2020</div></div>
      <IconBtn label="Notifications" className="mr-5 ml-3"><Svg w={13} h={13}><path d="M0.500 0.500h12v9h-4L6 12V9.500H0.500z" stroke="#fff" /></Svg></IconBtn>
    </div>
  </footer>
);

export default function App() {
  return (
    <div className="flex h-screen w-full flex-col overflow-hidden font-['Open_Sans',sans-serif] leading-none">
      <Header />
      <Ribbon />
      <FormulaBar />
      <Sheet />
      <SheetTabs />
      <StatusBar />
      <Taskbar />
    </div>
  );
}
